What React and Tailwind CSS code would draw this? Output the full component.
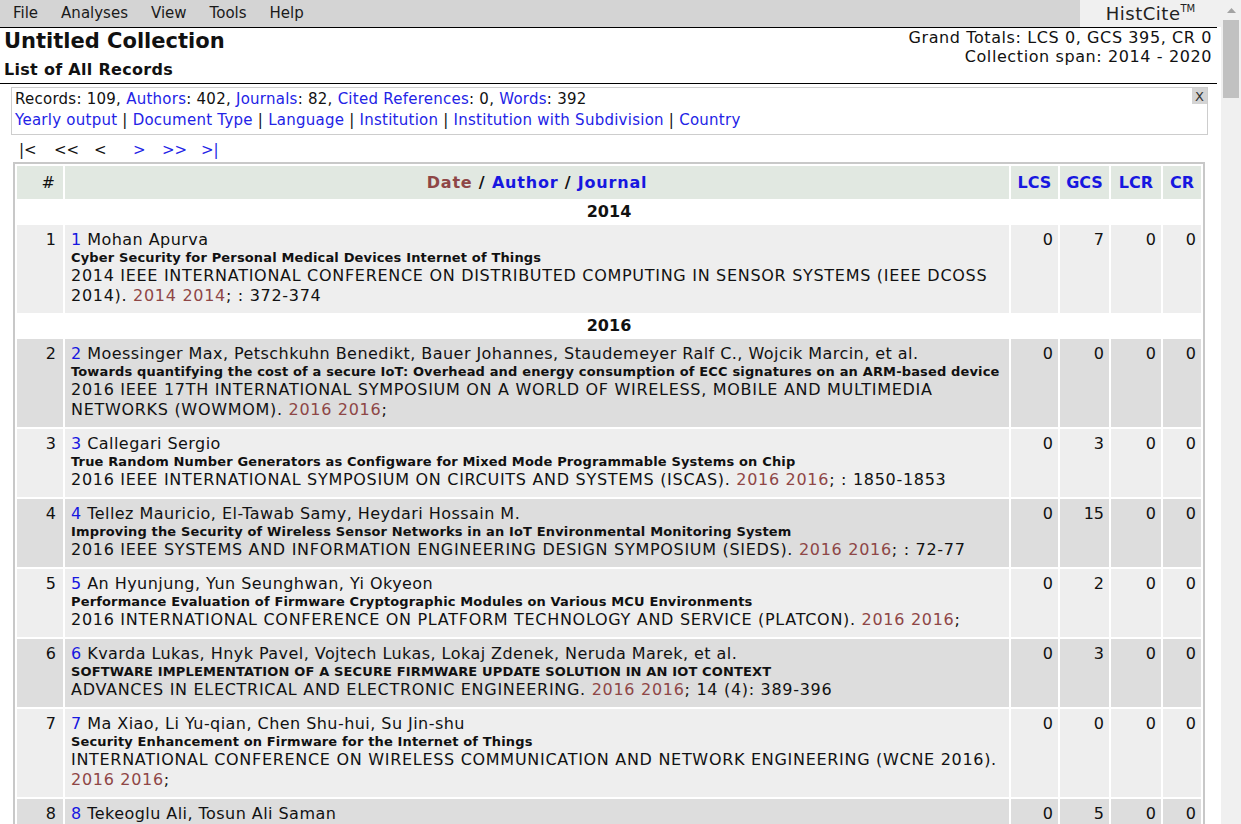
const records = [
  {
    n: 1,
    authors: 'Mohan Apurva',
    title: 'Cyber Security for Personal Medical Devices Internet of Things',
    source: '2014 IEEE INTERNATIONAL CONFERENCE ON DISTRIBUTED COMPUTING IN SENSOR SYSTEMS (IEEE DCOSS 2014).',
    tail: '; : 372-374',
    stats: [0, 7, 0, 0],
  },
  {
    n: 2,
    authors: 'Moessinger Max, Petschkuhn Benedikt, Bauer Johannes, Staudemeyer Ralf C., Wojcik Marcin, et al.',
    title: 'Towards quantifying the cost of a secure IoT: Overhead and energy consumption of ECC signatures on an ARM-based device',
    source: '2016 IEEE 17TH INTERNATIONAL SYMPOSIUM ON A WORLD OF WIRELESS, MOBILE AND MULTIMEDIA NETWORKS (WOWMOM).',
    tail: ';',
    stats: [0, 0, 0, 0],
  },
  {
    n: 3,
    authors: 'Callegari Sergio',
    title: 'True Random Number Generators as Configware for Mixed Mode Programmable Systems on Chip',
    source: '2016 IEEE INTERNATIONAL SYMPOSIUM ON CIRCUITS AND SYSTEMS (ISCAS).',
    tail: '; : 1850-1853',
    stats: [0, 3, 0, 0],
  },
  {
    n: 4,
    authors: 'Tellez Mauricio, El-Tawab Samy, Heydari Hossain M.',
    title: 'Improving the Security of Wireless Sensor Networks in an IoT Environmental Monitoring System',
    source: '2016 IEEE SYSTEMS AND INFORMATION ENGINEERING DESIGN SYMPOSIUM (SIEDS).',
    tail: '; : 72-77',
    stats: [0, 15, 0, 0],
  },
  {
    n: 5,
    authors: 'An Hyunjung, Yun Seunghwan, Yi Okyeon',
    title: 'Performance Evaluation of Firmware Cryptographic Modules on Various MCU Environments',
    source: '2016 INTERNATIONAL CONFERENCE ON PLATFORM TECHNOLOGY AND SERVICE (PLATCON).',
    tail: ';',
    stats: [0, 2, 0, 0],
  },
  {
    n: 6,
    authors: 'Kvarda Lukas, Hnyk Pavel, Vojtech Lukas, Lokaj Zdenek, Neruda Marek, et al.',
    title: 'SOFTWARE IMPLEMENTATION OF A SECURE FIRMWARE UPDATE SOLUTION IN AN IOT CONTEXT',
    source: 'ADVANCES IN ELECTRICAL AND ELECTRONIC ENGINEERING.',
    tail: '; 14 (4): 389-396',
    stats: [0, 3, 0, 0],
  },
  {
    n: 7,
    authors: 'Ma Xiao, Li Yu-qian, Chen Shu-hui, Su Jin-shu',
    title: 'Security Enhancement on Firmware for the Internet of Things',
    source: 'INTERNATIONAL CONFERENCE ON WIRELESS COMMUNICATION AND NETWORK ENGINEERING (WCNE 2016).',
    tail: ';',
    stats: [0, 0, 0, 0],
  },
  {
    n: 8,
    authors: 'Tekeoglu Ali, Tosun Ali Saman',
    title: '',
    source: '',
    tail: '',
    stats: [0, 5, 0, 0],
  },
];

const recordYear = ['2014', '2016', '2016', '2016', '2016', '2016', '2016', '2016'];

function MenuBar() {
  return (
    <div className="flex h-[28px] bg-[#d4d4d4] text-[15px] text-[#1a1a1a]">
      <div className="flex flex-1 items-center gap-[23px] pl-[13px]">
        <span>File</span>
        <span>Analyses</span>
        <span>View</span>
        <span>Tools</span>
        <span>Help</span>
      </div>
      <div className="flex w-[141px] items-center justify-center bg-[#f0f0f0] text-[18px] tracking-[0.5px] text-[#222]">
        HistCite<sup className="text-[10px] tracking-normal">TM</sup>
      </div>
    </div>
  );
}

function Scrollbar() {
  return (
    <div className="flex w-[20px] flex-col items-center bg-[#f0f0f0]">
      <div className="flex h-[20px] items-center justify-center">
        <svg width="9" height="5" viewBox="0 0 9 5">
          <path d="M0 5 L4.5 0 L9 5 Z" fill="#a3a3a3" />
        </svg>
      </div>
      <div className="h-[78px] w-[16px] bg-[#c1c1c1]" />
    </div>
  );
}

function NumCell({ value, bg }) {
  return (
    <td className={`${bg} pr-[5px] pt-[5px] text-right align-top leading-[20px] tracking-normal`}>{value}</td>
  );
}

function App() {
  return (
    <div className="flex h-[824px] w-[1241px] overflow-hidden bg-white text-[16px] text-[#111]" style={{ fontFamily: '"DejaVu Sans", Verdana, sans-serif' }}>
      <div className="flex min-w-0 flex-1 flex-col">
        <MenuBar />
        <div className="mr-[4px] flex justify-between border-t border-black">
          <div className="pb-[3px] pl-[4px] pt-[1px]">
            <h1 className="text-[21px] font-bold leading-[24px]">Untitled Collection</h1>
            <h2 className="mt-[6px] text-[16px] font-bold leading-[21px] tracking-[0.3px]">List of All Records</h2>
          </div>
          <div className="pr-[5px] text-right leading-[19px] tracking-[0.6px]">
            <p>Grand Totals: LCS 0, GCS 395, CR 0</p>
            <p>Collection span: 2014 - 2020</p>
          </div>
        </div>
        <div className="mr-[4px] border-t border-black" />

        <div className="relative ml-[11px] mr-[13px] mt-[3px] border border-[#cdcdcd] px-[3px] pb-[3px] pt-[1px] text-[15px] leading-[21px] tracking-[0.25px]">
          <p>
            Records: 109, <span className="text-[#2323e6]">Authors</span>: 402, <span className="text-[#2323e6]">Journals</span>: 82,{' '}
            <span className="text-[#2323e6]">Cited References</span>: 0, <span className="text-[#2323e6]">Words</span>: 392
          </p>
          <p>
            <span className="text-[#2323e6]">Yearly output</span> | <span className="text-[#2323e6]">Document Type</span> |{' '}
            <span className="text-[#2323e6]">Language</span> | <span className="text-[#2323e6]">Institution</span> |{' '}
            <span className="text-[#2323e6]">Institution with Subdivision</span> | <span className="text-[#2323e6]">Country</span>
          </p>
          <span className="absolute right-0 top-0 flex h-[16px] w-[15px] items-center justify-center bg-[#d4d4d4] text-[13px] tracking-normal text-[#333]">X</span>
        </div>

        <div className="ml-[19px] mt-[6px] flex h-[19px] items-center text-[15px]">
          <span className="w-[35px]">|&lt;</span>
          <span className="w-[40px]">&lt;&lt;</span>
          <span className="w-[39px]">&lt;</span>
          <span className="w-[29px] text-[#2323e6]">&gt;</span>
          <span className="w-[39px] text-[#2323e6]">&gt;&gt;</span>
          <span className="text-[#2323e6]">&gt;|</span>
        </div>

        <table className="ml-[13px] mt-[2px] w-[1192px] table-fixed border-separate border-spacing-[2px] border-[2px] border-[#c8c8c8]">
          <colgroup>
            <col className="w-[46px]" />
            <col />
            <col className="w-[47px]" />
            <col className="w-[49px]" />
            <col className="w-[50px]" />
            <col className="w-[38px]" />
          </colgroup>
          <thead>
            <tr className="h-[33px] bg-[#e1e8e1] font-bold">
              <th className="pr-[8px] text-right font-normal">#</th>
              <th className="text-center tracking-[0.8px]">
                <span className="text-[#8e4646]">Date</span> / <span className="text-[#1717e0]">Author</span> / <span className="text-[#1717e0]">Journal</span>
              </th>
              <th className="text-center text-[#1717e0]">LCS</th>
              <th className="text-center text-[#1717e0]">GCS</th>
              <th className="text-center text-[#1717e0]">LCR</th>
              <th className="text-center text-[#1717e0]">CR</th>
            </tr>
          </thead>
          <tbody>
            {records.map((r, i) => {
              const bg = i % 2 === 0 ? 'bg-[#eeeeee]' : 'bg-[#dddddd]';
              const showYear = i === 0 || recordYear[i] !== recordYear[i - 1];
              return [
                showYear && (
                  <tr key={`y${i}`} className="h-[22px]">
                    <td colSpan={6} className="text-center font-bold leading-[20px]">
                      {recordYear[i]}
                    </td>
                  </tr>
                ),
                <tr key={r.n}>
                  <td className={`${bg} pr-[7px] pt-[5px] text-right align-top leading-[20px]`}>{r.n}</td>
                  <td className={`${bg} pb-[7px] pl-[6px] pr-[4px] pt-[5px] align-top`}>
                    <p className="leading-[20px] tracking-[0.45px]">
                      <span className="text-[#1717e0]">{r.n}</span> {r.authors}
                    </p>
                    {r.title && <p className="text-[13px] font-bold leading-[16px] tracking-[0.15px]">{r.title}</p>}
                    {r.source && (
                      <p className="leading-[20px] tracking-[0.7px]">
                        {r.source} <span className="text-[#8e4646]">{recordYear[i]} {recordYear[i]}</span>
                        {r.tail}
                      </p>
                    )}
                  </td>
                  {r.stats.map((s, j) => (
                    <NumCell key={j} value={s} bg={bg} />
                  ))}
                </tr>,
              ];
            })}
          </tbody>
        </table>
      </div>
      <Scrollbar />
    </div>
  );
}

export default App;
